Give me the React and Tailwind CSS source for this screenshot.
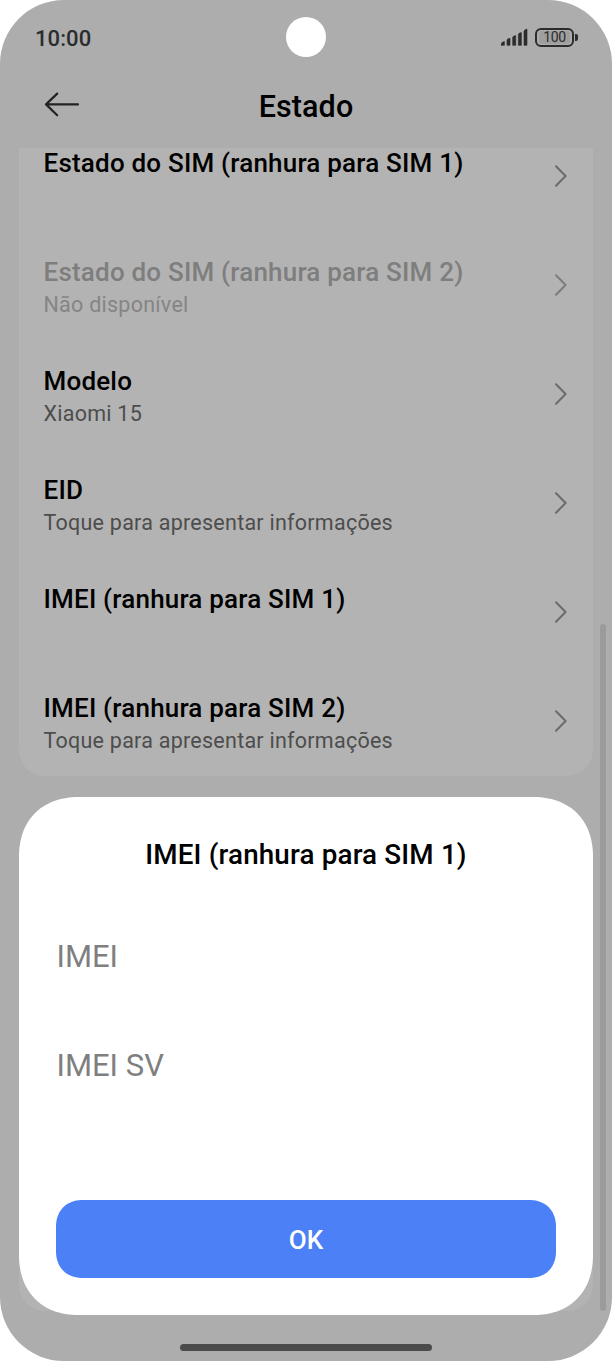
import React from "react";

const rows = [
  { title: "Estado do SIM (ranhura para SIM 1)", sub: "" },
  { title: "Estado do SIM (ranhura para SIM 2)", sub: "Não disponível", disabled: true },
  { title: "Modelo", sub: "Xiaomi 15" },
  { title: "EID", sub: "Toque para apresentar informações" },
  { title: "IMEI (ranhura para SIM 1)", sub: "" },
  { title: "IMEI (ranhura para SIM 2)", sub: "Toque para apresentar informações" },
];

function Chevron({ disabled }) {
  return (
    <svg className="-mt-[1px] shrink-0" width="14" height="24" viewBox="0 0 14 24" fill="none" stroke={disabled ? "#7c7c7c" : "#6b6b6b"} strokeWidth="2" strokeLinecap="round" strokeLinejoin="round">
      <path d="M2 2.3 11.6 12 2 21.7" />
    </svg>
  );
}

function StatusBar() {
  return (
    <div className="relative flex h-[74px] items-center justify-between pl-[35px] pr-[34.5px] text-[#2b2c2d]">
      <span className="mt-[3px] text-[22px] leading-[26px] font-[480] tracking-[0.1px]">10:00</span>
      <div className="absolute top-[17px] left-[286px] size-[40px] rounded-full bg-white" />
      <div className="flex items-center gap-[7px]">
        <svg width="27" height="18" viewBox="0 0 27 18" fill="none" stroke="#2b2c2d" strokeWidth="3.4" strokeLinejoin="round">
          <path d="M0 17.3v-1.4q.8-2 3.4-2.4v3.8zM6 17.3v-5.6q.8-1 3-1.4v7zM11.7 17.3V9q.8-1 3-1.4v9.7zM17.4 17.3V6q.8-1 3-1.4v12.7zM23 17.3V3q.8-1.6 3-2v16.3z" fill="#2b2c2d" stroke="#2b2c2d" strokeWidth=".6" />
        </svg>
        <div className="flex items-center gap-px">
          <div className="flex h-[19px] w-[39px] items-center justify-center rounded-[6px] border-2 border-[#2b2c2d]">
            <span className="flex h-[13px] w-[31px] items-center justify-center rounded-[3px] bg-[#9f9f9f] pt-px text-[14px] leading-[13px] font-[450] tracking-[-0.3px]">100</span>
          </div>
          <div className="h-[7px] w-[2.5px] rounded-r-[2px] bg-[#2b2c2d]" />
        </div>
      </div>
    </div>
  );
}

function Header() {
  return (
    <header className="grid h-[74px] grid-cols-[1fr_auto_1fr] items-start">
      <svg className="mt-[18px] ml-[44px]" width="36" height="25" viewBox="0 0 36 25" fill="none" stroke="#232323" strokeWidth="2.2" strokeLinecap="round" strokeLinejoin="round">
        <path d="M34 12.4H2M13.2 1.6 2 12.4l11.2 10.8" />
      </svg>
      <h1 className="mt-[15px] text-[30.5px] leading-[36px] font-[480] tracking-[0.1px] text-black">Estado</h1>
    </header>
  );
}

function Row({ title, sub, disabled }) {
  return (
    <li className="flex h-[109px] shrink-0 items-center justify-between pr-[25px] pl-[24.5px]">
      <div className="h-[75px] pt-[8px]">
        <p className={`text-[26px] leading-[32px] font-[480] tracking-[0.2px] ${disabled ? "text-[#7e7e7e]" : "text-black"}`}>{title}</p>
        <p className={`mt-px text-[21.5px] leading-[32px] tracking-[0.25px] ${disabled ? "text-[#858585]" : "text-[#4d4d4d]"}`}>{sub}</p>
      </div>
      <Chevron disabled={disabled} />
    </li>
  );
}

function Dialog() {
  return (
    <section role="dialog" className="absolute top-[797px] left-[19px] flex h-[518px] w-[574px] flex-col rounded-[60px] bg-white px-[37px] pt-[40px] pb-[37px] [corner-shape:superellipse(1.15)]">
      <h2 className="text-center text-[27.8px] leading-[36px] font-[480] tracking-[0.16px] text-black">IMEI (ranhura para SIM 1)</h2>
      <p className="mt-[66px] pl-[0.5px] text-[31px] leading-[36px] text-[#7f7f7f]">IMEI</p>
      <p className="mt-[73px] pl-[0.5px] text-[31px] leading-[36px] text-[#7f7f7f]">IMEI SV</p>
      <button className="mt-auto h-[78px] w-full rounded-[27px] bg-[#4b80f6] pt-[2px] text-[26px] font-[480] text-white [corner-shape:superellipse(1.15)]">OK</button>
    </section>
  );
}

export default function App() {
  return (
    <div className="h-[1361px] w-[612px] overflow-hidden bg-white font-['Roboto',sans-serif]">
      <main className="relative h-full overflow-hidden rounded-[64px] bg-[#adadad]">
        <StatusBar />
        <Header />
        <div className="mx-[19px] h-[628px] overflow-hidden rounded-b-[26px] bg-[#b3b3b3]">
          <ul className="-mt-[26px] flex flex-col">
            {rows.map((r) => (
              <Row key={r.title} {...r} />
            ))}
          </ul>
        </div>
        <div className="mx-[19px] mt-[84px] h-[451px] rounded-b-[26px] bg-[#b3b3b3]" />
        <div className="absolute top-[624px] left-[600px] h-[687px] w-[6px] rounded-full bg-[#9b9b9b]" />
        <Dialog />
        <div className="absolute top-[1344px] left-[180px] h-[7px] w-[252px] rounded-full bg-[#4b4b4b]" />
      </main>
    </div>
  );
}
